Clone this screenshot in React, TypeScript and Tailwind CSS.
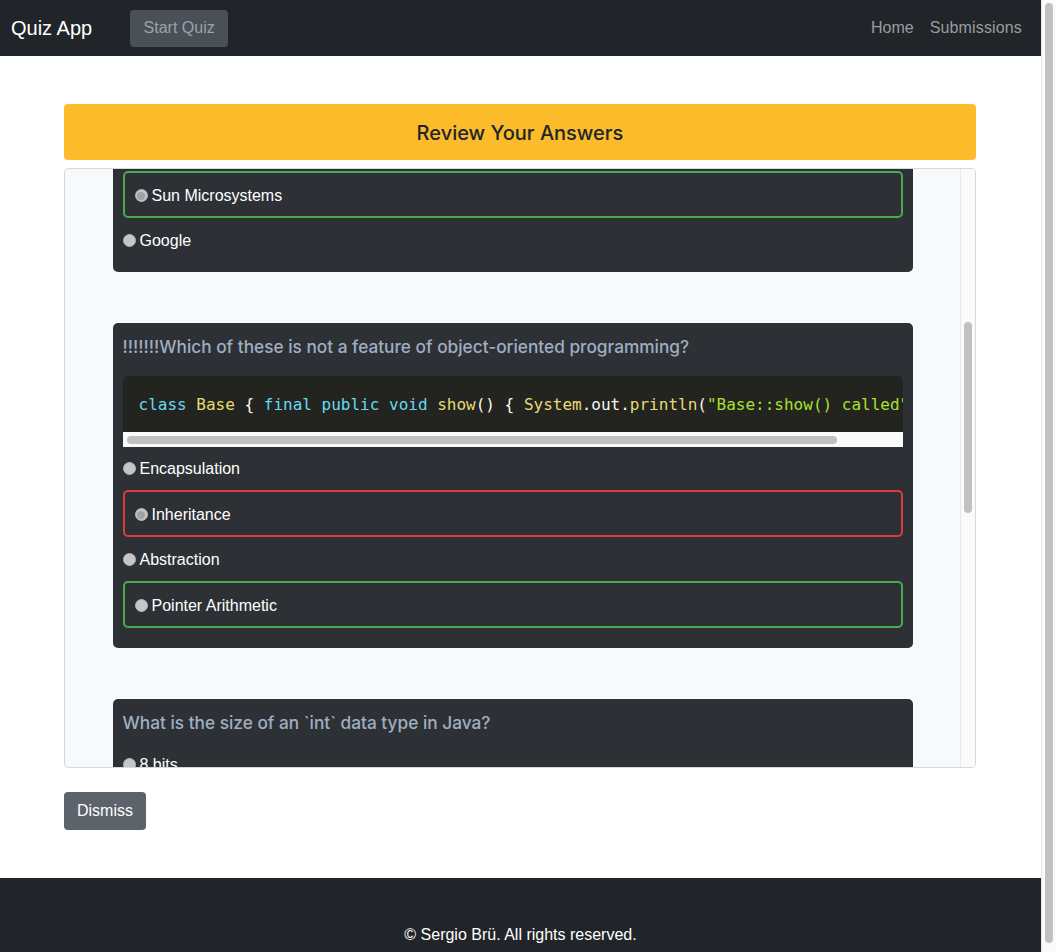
import React from 'react';

type Mark = 'none' | 'correct' | 'wrong';

type Option = {
  label: string;
  mark?: Mark;
  picked?: boolean;
};

type Question = {
  text: string;
  code?: boolean;
  options: Option[];
};

const QUESTIONS: Question[] = [
  {
    text: 'Which company originally developed Java?',
    options: [
      { label: 'Microsoft' },
      { label: 'Oracle' },
      { label: 'Sun Microsystems', mark: 'correct', picked: true },
      { label: 'Google' },
    ],
  },
  {
    text: '!!!!!!!Which of these is not a feature of object-oriented programming?',
    code: true,
    options: [
      { label: 'Encapsulation' },
      { label: 'Inheritance', mark: 'wrong', picked: true },
      { label: 'Abstraction' },
      { label: 'Pointer Arithmetic', mark: 'correct' },
    ],
  },
  {
    text: 'What is the size of an `int` data type in Java?',
    options: [{ label: '8 bits' }, { label: '16 bits' }, { label: '32 bits', mark: 'correct' }, { label: '64 bits' }],
  },
];

function Radio({ picked }: { picked?: boolean }) {
  return (
    <span className="mr-[4px] flex h-[13px] w-[13px] shrink-0 items-center justify-center rounded-full border border-[#b4b4b4] bg-[#c6c6c6]">
      {picked && <span className="h-[8px] w-[8px] rounded-full bg-[#a2a2a2]" />}
    </span>
  );
}

function OptionRow({ option }: { option: Option }) {
  const mark = option.mark ?? 'none';
  if (mark === 'none') {
    return (
      <div className="mb-[10px] flex h-6 items-center text-base leading-6 text-white">
        <Radio picked={option.picked} />
        <span className="pt-px">{option.label}</span>
      </div>
    );
  }
  return (
    <div
      className={
        mark === 'correct'
          ? 'mb-[10px] flex items-center rounded-[5px] border-2 border-[#4aaa4e] px-[10px] pt-[10.5px] pb-[8.5px] text-base leading-6 text-white'
          : 'mb-[10px] flex items-center rounded-[5px] border-2 border-[#e03a3e] px-[10px] pt-[10.5px] pb-[8.5px] text-base leading-6 text-white'
      }
    >
      <Radio picked={option.picked} />
      {option.label}
    </div>
  );
}

function CodeBlock() {
  return (
    <div className="mb-[9px] overflow-hidden rounded-t-[5px]">
      <pre className="overflow-hidden whitespace-pre bg-[#23241f] px-4 pt-[17px] pb-[15px] font-['DejaVu_Sans_Mono',monospace] text-base leading-6 text-[#f8f8f2]">
        <span className="text-[#66d9ef]">class</span> <span className="text-[#e6db74]">Base</span> {'{ '}
        <span className="text-[#66d9ef]">final</span> <span className="text-[#66d9ef]">public</span>{' '}
        <span className="text-[#66d9ef]">void</span> <span className="text-[#e6db74]">show</span>() {'{ '}
        <span className="text-[#e6db74]">System</span>.out.<span className="text-[#e6db74]">println</span>(
        <span className="text-[#a6e22e]">"Base::show() called"</span>); {'} }'}
      </pre>
      {/* horizontal scrollbar of the pre */}
      <div className="flex h-[15px] items-center bg-[#fafafa] px-[4px]">
        <div className="h-[8px] w-[710px] rounded-full bg-[#c1c1c1]" />
      </div>
    </div>
  );
}

function QuestionCard({ q, className }: { q: Question; className?: string }) {
  return (
    <div className={`w-[800px] shrink-0 rounded-[5px] bg-[#2d3136] px-[10px] pt-[10px] pb-[10px] ${className ?? ''}`}>
      <div className="mb-4 font-['Inter',sans-serif] text-[17.25px] font-medium leading-[27px] text-[#a0aec0]">{q.text}</div>
      {q.code && <CodeBlock />}
      {q.options.map((o) => (
        <OptionRow key={o.label} option={o} />
      ))}
    </div>
  );
}

export default function App() {
  return (
    <div className="flex h-[952px] w-[1056px] overflow-hidden bg-white font-['Liberation_Sans',Arial,sans-serif]">
      <div className="flex w-[1041px] shrink-0 flex-col">
        <nav className="flex h-14 shrink-0 items-center bg-[#212529] pl-[11px] pr-[12px]">
          <span className="text-[20px] leading-[30px] text-white">Quiz App</span>
          <button className="ml-[38px] h-[37px] w-[98px] rounded-[4px] bg-[#4a5057] text-base text-[#9da2a7]">
            Start Quiz
          </button>
          <div className="ml-auto flex items-center text-base text-[#9a9c9f]">
            <a className="px-2">Home</a>
            <a className="pl-2 pr-[7px] tracking-[0.15px]">Submissions</a>
          </div>
        </nav>

        <main className="flex-1 pt-12">
          <div className="ml-16 w-[912px]">
            <div className="flex h-14 items-center justify-center rounded-[4px] bg-[#fbbb2b] pt-[2px] font-['Inter',sans-serif] text-[20px] font-medium text-[#212529]">
              Review Your Answers
            </div>

            <div className="mt-[8px] flex h-[600px] overflow-hidden rounded-[4px] border border-[#d6d8db] bg-[#f8f9fa]">
              <div className="flex flex-1 flex-col items-center gap-[51px] overflow-hidden">
                <QuestionCard q={QUESTIONS[0]} className="mt-[-119px]" />
                <QuestionCard q={QUESTIONS[1]} />
                <QuestionCard q={QUESTIONS[2]} />
              </div>
              <div className="w-[15px] shrink-0 border-l border-[#e8e8e8] bg-[#fafafa] pl-[3px] pt-[153px]">
                <div className="h-[191px] w-[8px] rounded-full bg-[#c1c1c1]" />
              </div>
            </div>

            <button className="mt-6 h-[38px] w-[82px] rounded-[4px] bg-[#5c636a] text-base text-white">Dismiss</button>
          </div>
        </main>

        <footer className="h-[74px] shrink-0 bg-[#212529] pt-[45px] text-center text-base leading-6 text-white">
          © Sergio Brü. All rights reserved.
        </footer>
      </div>

      {/* page scrollbar */}
      <div className="w-[15px] shrink-0 border-l border-[#e6e6e6] bg-[#fafafa] pl-[3px] pt-[3px]">
        <div className="h-[940px] w-[8px] rounded-full bg-[#c1c1c1]" />
      </div>
    </div>
  );
}
